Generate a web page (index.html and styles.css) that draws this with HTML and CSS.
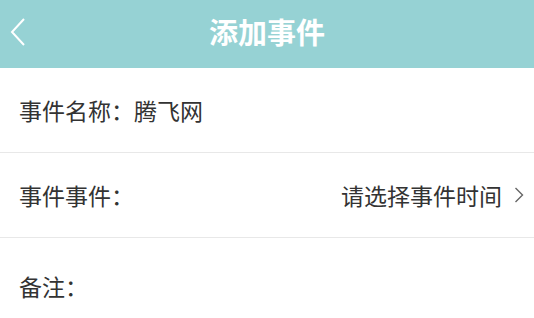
FILE: index.html
```html
<!DOCTYPE html>
<html lang="zh-CN">
<head>
    <meta charset="UTF-8">
    <meta name="viewport" content="width=device-width, initial-scale=1.0">
    <title>添加事件</title>
    <link rel="stylesheet" href="styles.css">
</head>
<body>
    <header class="nav-bar">
        <a class="back-btn" href="#">
            <svg width="18" height="30" viewBox="0 0 18 30">
                <path d="M15 2 L3 15 L15 28" fill="none" stroke="#fff" stroke-width="2"/>
            </svg>
        </a>
        <h1 class="nav-title">添加事件</h1>
    </header>

    <div class="form">
        <div class="form-row">
            <span class="label">事件名称：</span>
            <span class="value">腾飞网</span>
        </div>
        <div class="form-row">
            <span class="label">事件事件：</span>
            <span class="picker">
                请选择事件时间
                <svg class="arrow" width="10" height="18" viewBox="0 0 10 18">
                    <path d="M1.5 2 L8.5 9 L1.5 16" fill="none" stroke="#666" stroke-width="1.4"/>
                </svg>
            </span>
        </div>
        <div class="form-row note-row">
            <span class="label">备注：</span>
        </div>
    </div>
</body>
</html>
```

FILE: styles.css
```css
body {
    margin: 0;
    font-family: "Noto Sans CJK SC", "Noto Sans", sans-serif;
    background-color: #fff;
    color: #333;
}
.nav-bar {
    position: relative;
    height: 68px;
    background-color: #96d2d4;
    display: flex;
    align-items: center;
    justify-content: center;
}
.back-btn {
    position: absolute;
    left: 9px;
    top: 17px;
    display: block;
    line-height: 0;
}
.nav-title {
    margin: 0 0 6px;
    color: #fff;
    font-size: 29px;
    font-weight: bold;
}
.form-row {
    display: flex;
    align-items: center;
    height: 84px;
    padding: 0 10px 0 19px;
    border-bottom: 1px solid #e8e8e8;
    font-size: 23px;
}
.picker {
    margin-left: auto;
    display: flex;
    align-items: center;
}
.arrow {
    margin-left: 12px;
}
.note-row {
    align-items: flex-start;
    height: 80px;
    box-sizing: border-box;
    padding-top: 31px;
    border-bottom: none;
}
```
